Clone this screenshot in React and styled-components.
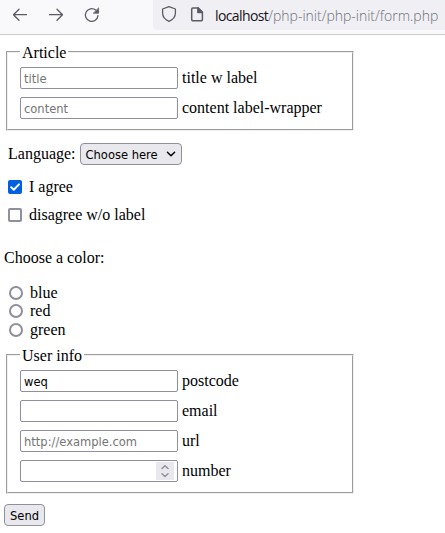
import React from "react";
import styled, { createGlobalStyle } from "styled-components";

const Global = createGlobalStyle`
  *, *::before, *::after { box-sizing: border-box; }
  body { margin: 0; background: #fff; color: #000; overflow: hidden;
    font: 16px/18px "Liberation Serif", "Times New Roman", serif; }
`;

const Toolbar = styled.header`
  display: flex;
  height: 35px;
  background: #f9f9fb;
  border-bottom: 1px solid #ccc;
`;
const Navigation = styled.nav`
  display: flex;
  flex: none;
  align-items: flex-start;
  width: 153px;
  padding: 7px 0 0 12px;
  gap: 20px;
`;
const Icon = styled.svg`
  display: block;
  flex: none;
  width: 16px;
  height: 16px;
  fill: none;
  stroke: #5b5b66;
  stroke-width: 1.3;
  stroke-linecap: round;
  stroke-linejoin: round;
`;
const AddressBar = styled.div`
  display: flex;
  flex: 1;
  min-width: 0;
  height: 30px;
  padding: 6px 0 0 8px;
  gap: 12px;
  background: #f0f0f4;
  border-bottom-left-radius: 4px;
`;
const Url = styled.span`
  margin-left: -2px;
  font: 14px/19px "Open Sans", sans-serif;
  letter-spacing: -0.01px;
  font-weight: 300;
  color: #6f6f78;
  white-space: nowrap;
`;
const Host = styled.span`
  color: #15141a;
  font-weight: 400;
  letter-spacing: -0.6px;
`;

const Form = styled.form`
  padding-top: 8px;
`;
const Fieldset = styled.fieldset`
  width: 348px;
  height: ${(p) => p.$height}px;
  margin: 0 0 0 6px;
  padding: 6px 12px 0;
  border: 2px groove #f0f0f0;
`;
const Legend = styled.legend`
  height: 18px;
  padding: 0 2px;
  line-height: 20px;
`;
const Field = styled.label`
  display: flex;
  width: 320px;
  height: 22px;
  margin: 0 0 8px;
  align-items: center;
  gap: 4px;
  white-space: nowrap;
`;
const InputShell = styled.span`
  display: flex;
  align-items: center;
  width: 158px;
  height: 22px;
  padding: 0 3px;
  border: 1px solid #8f8f9d;
  border-radius: 2px;
  background: #fff;
`;
const Input = styled.input`
  flex: 1;
  min-width: 0;
  height: 20px;
  padding: 0;
  border: 0;
  outline: 0;
  background: transparent;
  color: #000;
  font: 12.8px "DejaVu Sans Condensed", "DejaVu Sans", sans-serif;
  font-stretch: condensed;
  &::placeholder { color: #757575; opacity: 1; }
`;
const Spinner = styled.span`
  width: 18px;
  height: 18px;
  padding: 1px;
  background: #e9e9ed;
`;

const LanguageRow = styled.div`
  display: flex;
  height: 22px;
  margin: 12px 0 0 8px;
  align-items: center;
  gap: 4px;
`;
const Select = styled.button`
  display: flex;
  align-items: center;
  justify-content: space-between;
  width: 102px;
  height: 22px;
  padding: 0 2px 0 5px;
  border: 1px solid #8f8f9d;
  border-radius: 4px;
  background: #e9e9ed;
  color: #000;
  font: 12.8px "DejaVu Sans Condensed", "DejaVu Sans", sans-serif;
  font-stretch: condensed;
  white-space: nowrap;
`;
const Checks = styled.div`
  display: grid;
  gap: 10px;
  margin: 13px 0 0 8px;
`;
const Choice = styled.label`
  display: flex;
  align-items: center;
  height: 18px;
  gap: 7px;
`;
const Checkbox = styled.input`
  appearance: none;
  width: 14px;
  height: 14px;
  margin: 0;
  border: 2px solid #8f8f9d;
  border-radius: 2px;
  background: #fff;
  &:checked {
    border-color: #0060df;
    background: #0060df;
  }
`;
const CheckControl = styled.span`
  display: grid;
  width: 14px;
  height: 14px;
  > * { grid-area: 1 / 1; }
`;
const Tick = styled(Icon)`
  width: 14px;
  height: 14px;
  stroke: white;
  stroke-width: 2;
  z-index: 1;
`;
const ColorTitle = styled.p`
  margin: 25px 0 0 4px;
`;
const Radios = styled.div`
  display: grid;
  grid-template-rows: 18px 19px 18px;
  margin: 17px 0 0 9px;
  height: 62px;
`;
const Radio = styled(Checkbox)`
  border-radius: 50%;
`;
const Submit = styled(Select)`
  justify-content: center;
  width: 41px;
  padding: 0;
  margin: 10px 0 0 4px;
`;

function TextField({ label, spinner, ...props }) {
  return (
    <Field>
      <InputShell>
        <Input {...props} />
        {spinner && (
          <Spinner>
            <Icon viewBox="0 0 16 16">
              <path d="M5 5.5 8 2.8l3 2.7M5 10.8l3 2.7 3-2.7" stroke="#8f8f9d" strokeWidth="1.5" />
            </Icon>
          </Spinner>
        )}
      </InputShell>
      {label}
    </Field>
  );
}

export default function App() {
  return (
    <>
      <Global />
      <Toolbar>
        <Navigation>
          <Icon viewBox="0 0 16 16"><path d="M14.5 7.7H1.7M7 2.2 1.5 7.7 7 13.2" /></Icon>
          <Icon viewBox="0 0 16 16"><path d="M1.5 7.7h12.8M9 2.2l5.5 5.5L9 13.2" /></Icon>
          <Icon viewBox="0 0 16 16">
            <path d="M14 8.6A6.3 6.3 0 1 1 11.7 3.1" />
            <path d="M14.6 1.3v4.9H9.7z" fill="#5b5b66" strokeWidth=".8" />
          </Icon>
        </Navigation>
        <AddressBar>
          <Icon viewBox="0 0 16 16"><path d="M8 .7 14.4 3v4.1c0 3.7-2.2 6.6-6.4 8.2-4.2-1.6-6.4-4.5-6.4-8.2V3z" /></Icon>
          <Icon viewBox="0 0 16 16">
            <path d="M3.9 2h5.4l4.1 4v7.5a1.2 1.2 0 0 1-1.2 1.2H3.9a1.2 1.2 0 0 1-1.2-1.2V3.2A1.2 1.2 0 0 1 3.9 2z" strokeWidth="1.5" />
            <path d="M8.8 1.8v4.7h4.6z" fill="#5b5b66" />
          </Icon>
          <Url><Host>localhost</Host>/php-init/php-init/form.php</Url>
        </AddressBar>
      </Toolbar>
      <Form onSubmit={(e) => e.preventDefault()}>
        <Fieldset $height={88}>
          <Legend>Article</Legend>
          <TextField label="title w label" placeholder="title" />
          <TextField label="content label-wrapper" placeholder="content" />
        </Fieldset>
        <LanguageRow>
          Language:
          <Select type="button">
            Choose here
            <Icon viewBox="0 0 16 16">
              <path d="m4.4 6.2 3.6 3.6 3.6-3.6" stroke="#000" strokeWidth="1.5" />
            </Icon>
          </Select>
        </LanguageRow>
        <Checks>
          <Choice>
            <CheckControl>
              <Checkbox type="checkbox" defaultChecked />
              <Tick viewBox="0 0 14 14"><path d="m3.2 7.2 2.6 2.6 5.2-5.4" /></Tick>
            </CheckControl>
            I agree
          </Choice>
          <Choice><Checkbox type="checkbox" />disagree w/o label</Choice>
        </Checks>
        <ColorTitle>Choose a color:</ColorTitle>
        <Radios>
          {["blue", "red", "green"].map((color) => (
            <Choice key={color}><Radio type="radio" name="color" />{color}</Choice>
          ))}
        </Radios>
        <Fieldset $height={148}>
          <Legend>User info</Legend>
          <TextField label="postcode" defaultValue="weq" />
          <TextField label="email" type="email" />
          <TextField label="url" type="url" placeholder="http://example.com" />
          <TextField label="number" inputMode="numeric" spinner />
        </Fieldset>
        <Submit type="submit">Send</Submit>
      </Form>
    </>
  );
}
